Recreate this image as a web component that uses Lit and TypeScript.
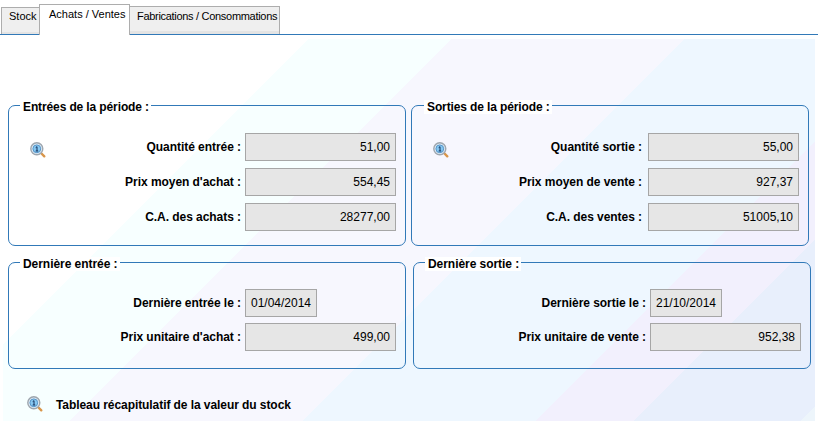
import { LitElement, html, css, svg } from "lit";
import { customElement } from "lit/decorators.js";

const lens = svg`<svg class="lens" viewBox="0 0 16 16" width="16" height="16" aria-hidden="true">
  <path d="M11 11L14.3 14.3" stroke="#d9964a" stroke-width="2.4" stroke-linecap="round"/>
  <circle cx="6.8" cy="6.8" r="6" fill="#dbe9f4" stroke="#9ea6ae" stroke-width="1.4"/>
  <circle cx="6.8" cy="6.8" r="3.9" fill="#86c8f2" stroke="#4f8fc4" stroke-width="0.9"/>
  <path d="M5.7 5.6L7 4.7V9M5.7 9H8.2" fill="none" stroke="#12305c" stroke-width="1"/>
</svg>`;

interface Row { label: string; value: string; date?: boolean; icon?: boolean }
interface Panel { title: string; rows: Row[]; short?: boolean }

const top: Panel[] = [
  {
    title: "Entrées de la période :",
    rows: [
      { label: "Quantité entrée :", value: "51,00", icon: true },
      { label: "Prix moyen d'achat :", value: "554,45" },
      { label: "C.A. des achats :", value: "28277,00" },
    ],
  },
  {
    title: "Sorties de la période :",
    rows: [
      { label: "Quantité sortie :", value: "55,00", icon: true },
      { label: "Prix moyen de vente :", value: "927,37" },
      { label: "C.A. des ventes :", value: "51005,10" },
    ],
  },
];

const bottom: Panel[] = [
  {
    title: "Dernière entrée :",
    short: true,
    rows: [
      { label: "Dernière entrée le :", value: "01/04/2014", date: true },
      { label: "Prix unitaire d'achat :", value: "499,00" },
    ],
  },
  {
    title: "Dernière sortie :",
    short: true,
    rows: [
      { label: "Dernière sortie le :", value: "21/10/2014", date: true },
      { label: "Prix unitaire de vente :", value: "952,38" },
    ],
  },
];

@customElement("app-root")
export class AppRoot extends LitElement {
  static styles = css`
    :host {
      display: block;
      width: 818px;
      height: 421px;
      overflow: hidden;
      background: #fff;
      font-family: "Liberation Sans", Arial, sans-serif;
      font-size: 12px;
      color: #000;
    }
    .tabs {
      display: flex;
      align-items: flex-end;
      height: 34px;
      border-bottom: 1px solid #3179b8;
      padding-left: 1px;
    }
    .tab {
      box-sizing: border-box;
      height: 28px;
      padding: 2px 0 0 0;
      border: 1px solid #adadad;
      border-bottom: none;
      background: linear-gradient(#efefef 0, #efefef 24px, #e4e4e4 24px);
      font-size: 11px;
      line-height: 14px;
      white-space: nowrap;
    }
    .tab.stock { width: 38px; padding-left: 7px; padding-top: 1px; border-right: none; height: 27px; }
    .tab.active {
      width: 91px;
      height: 31px;
      margin-bottom: -1px;
      padding: 2px 0 0 9px;
      background: #fff;
      position: relative;
    }
    .tab.fab { width: 150px; padding-left: 7px; border-left: none; letter-spacing: -0.3px; }
    .content {
      box-sizing: border-box;
      width: 812px;
      height: 382px;
      margin: 4px 0 0 3px;
      padding: 66px 0 0 5px;
      background: linear-gradient(
        135deg,
        #ffffff 0 216px,
        #f7ffff 216px 317px,
        #f7f7fe 317px 482px,
        #eef7ff 482px 647px,
        #f2f0fd 647px 716px,
        #e8effc 716px 834px,
        #edf5fb 834px
      );
    }
    .row-top { display: flex; gap: 5px; }
    .row-bottom { display: flex; gap: 7px; margin-top: 16px; }
    .panel {
      box-sizing: border-box;
      position: relative;
      width: 398px;
      border: 1px solid #3179b8;
      border-radius: 7px;
      padding: 27px 9px 14px 0;
      display: flex;
      flex-direction: column;
      gap: 7px;
    }
    .panel.short { padding: 26px 9px 17px 0; gap: 6px; }
    .title {
      position: absolute;
      top: -6px;
      left: 11px;
      padding: 0 2px 0 3px;
      background: #fff;
      font-weight: bold;
      letter-spacing: -0.12px;
      line-height: 14px;
      white-space: nowrap;
    }
    .panel.short .title { letter-spacing: -0.05px; }
    .row-top .panel:last-child .title { left: 12px; }
    .line { display: flex; align-items: center; height: 28px; }
    .label {
      font-weight: bold;
      letter-spacing: -0.05px;
      margin-left: auto;
      margin-right: 4px;
      white-space: nowrap;
    }
    .row-top .panel:last-child .label { margin-right: 6px; }
    .slot { width: 151px; }
    .field {
      box-sizing: border-box;
      width: 151px;
      height: 28px;
      border: 1px solid #a6a6a6;
      background: #e6e6e6;
      line-height: 26px;
      text-align: right;
      padding-right: 5px;
    }
    .field.date { width: 72px; text-align: center; padding-right: 0; }
    .line .lens { margin: 6px 0 0 21px; flex: none; }
    .foot {
      display: flex;
      align-items: center;
      gap: 13px;
      margin: 27px 0 0 19px;
      font-weight: bold;
      letter-spacing: -0.07px;
      height: 16px;
    }
    .foot span { padding-top: 1px; }
  `;

  private panel(p: Panel) {
    return html`<section class="panel ${p.short ? "short" : ""}">
      <div class="title">${p.title}</div>
      ${p.rows.map(
        (r) => html`<div class="line">
          ${r.icon ? lens : ""}
          <span class="label">${r.label}</span>
          <div class="slot"><div class="field ${r.date ? "date" : ""}">${r.value}</div></div>
        </div>`
      )}
    </section>`;
  }

  render() {
    return html`
      <nav class="tabs">
        <div class="tab stock">Stock</div>
        <div class="tab active">Achats / Ventes</div>
        <div class="tab fab">Fabrications / Consommations</div>
      </nav>
      <main class="content">
        <div class="row-top">${top.map((p) => this.panel(p))}</div>
        <div class="row-bottom">${bottom.map((p) => this.panel(p))}</div>
        <div class="foot">${lens}<span>Tableau récapitulatif de la valeur du stock</span></div>
      </main>
    `;
  }
}
